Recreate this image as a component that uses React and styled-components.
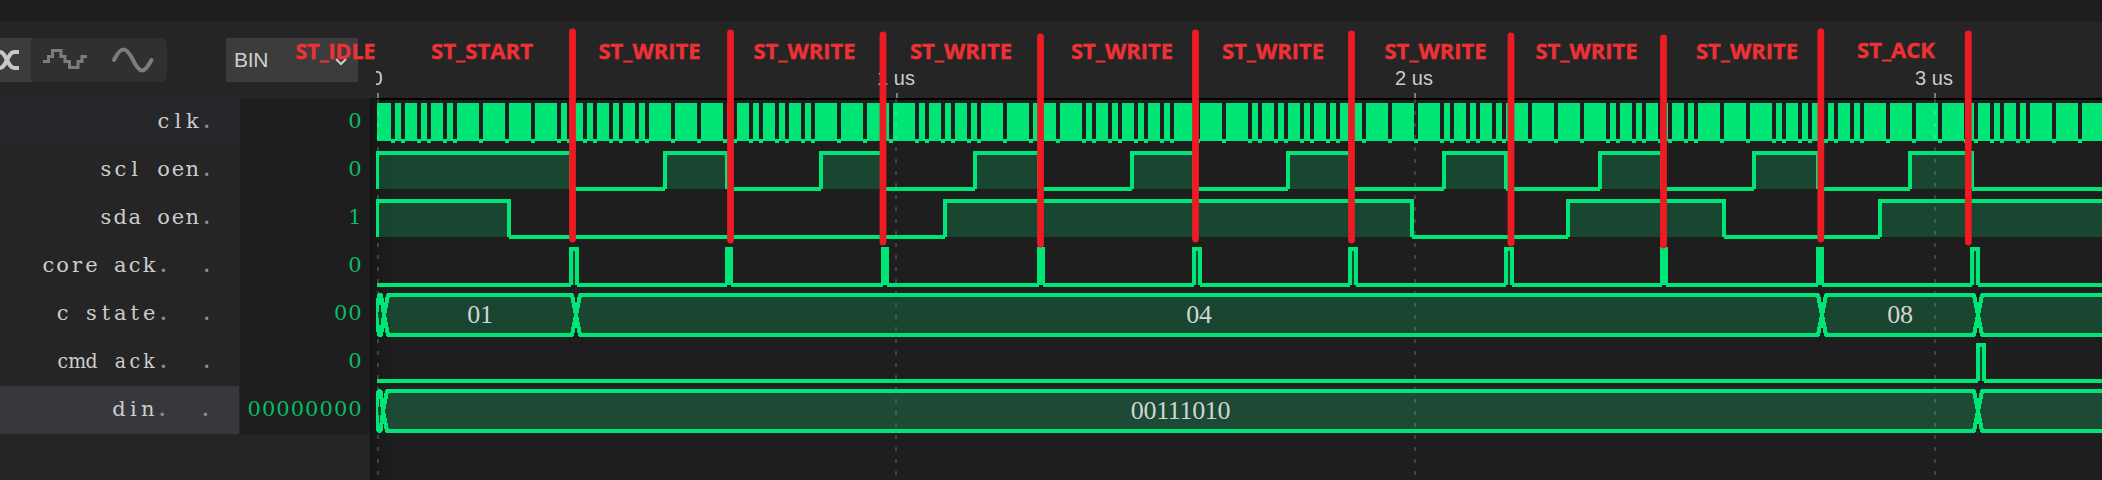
import React from "react";
import styled, { createGlobalStyle } from "styled-components";

const Global = createGlobalStyle`
  body { margin: 0; background: #1e1e1e; overflow: hidden; }
  * { box-sizing: border-box; }
`;

const Viewer = styled.div`
  position: relative;
  width: 2102px;
  height: 480px;
  display: flex;
  flex-direction: column;
  background: #1e1e1e;
  overflow: hidden;
`;
const TopStrip = styled.div`
  height: 22px;
  flex: none;
`;
const Header = styled.header`
  height: 76px;
  flex: none;
  display: flex;
  background: #252525;
`;
const Toolbar = styled.div`
  width: 376px;
  flex: none;
  display: flex;
  padding-top: 16px;
`;
const ModeGroup = styled.div`
  width: 167px;
  height: 44px;
  display: flex;
  border-radius: 0 6px 6px 0;
  overflow: hidden;
  background: #303030;
`;
const ModeButton = styled.button`
  width: ${(p) => p.$w}px;
  height: 44px;
  padding: 0;
  border: 0;
  display: block;
  background: ${(p) => (p.$active ? "#3c3c3c" : "transparent")};
  color: ${(p) => (p.$active ? "#c8c8c8" : "#7c7c7c")};
  svg { display: block; }
`;
const FormatSelect = styled.button`
  width: 132px;
  height: 44px;
  margin-left: 59px;
  border: 0;
  padding: 0 10px 0 8px;
  display: flex;
  align-items: center;
  justify-content: space-between;
  background: #3c3c3c;
  color: #cfcfcf;
  font: 21px "Liberation Sans", Arial, sans-serif;
  letter-spacing: -0.3px;
  svg { margin-top: 4px; }
`;
const Ruler = styled.div`
  flex: 1;
  height: 76px;
  overflow: hidden;
  svg { display: block; }
`;
const Body = styled.main`
  flex: 1;
  display: flex;
`;
const Names = styled.div`
  width: 240px;
  background: #252525;
`;
const NameRow = styled.div`
  width: ${(p) => (p.$selected ? 239 : 240)}px;
  height: 48px;
  display: flex;
  justify-content: flex-end;
  background: ${(p) => (p.$selected ? "#37373d" : p.$hover ? "#26272a" : "transparent")};
`;
const Values = styled.div`
  width: 130px;
  background: #252525;
`;
const ValueRow = styled.div`
  height: 48px;
  display: flex;
  justify-content: flex-end;
  background: #1e1e1e;
`;
const CellText = styled.text`
  font-family: "DejaVu Serif", "Liberation Serif", serif;
  font-size: ${(p) => p.$size}px;
  font-stretch: ${(p) => (p.$narrow ? "condensed" : "normal")};
  fill: ${(p) => p.$color};
  text-anchor: middle;
  white-space: pre;
`;
const Waves = styled.div`
  flex: 1;
  background: linear-gradient(90deg, #141414 0, #1a1a1a 8px, #1e1e1e 24px);
  svg { display: block; }
`;
const Annotations = styled.svg`
  position: absolute;
  left: 0;
  top: 0;
`;

const GREEN = "#00e676";
const END = 2110;
const CELL = 14.4;

const clkGaps = [
  391, 401, 417, 427, 443, 453, 479, 505, 531, 557, 567, 583, 593, 609, 619, 635, 645, 671, 697, 723,
  733, 749, 759, 775, 785, 801, 811, 837, 863, 889, 915, 925, 941, 951, 967, 977, 1003, 1029, 1056,
  1082, 1092, 1108, 1118, 1134, 1144, 1160, 1170, 1196, 1222, 1248, 1258, 1274, 1284, 1300, 1310,
  1326, 1336, 1362, 1388, 1414, 1440, 1450, 1466, 1476, 1492, 1502, 1528, 1554, 1580, 1606, 1616,
  1632, 1642, 1658, 1668, 1684, 1694, 1720, 1746, 1772, 1782, 1798, 1808, 1824, 1834, 1850, 1860,
  1886, 1912, 1938, 1964, 1974, 1990, 2000, 2016, 2026, 2052, 2078,
];
const sclHigh = [
  [377, 571], [665, 727], [821, 883], [975, 1039], [1132, 1194], [1288, 1350], [1444, 1506],
  [1600, 1662], [1754, 1818], [1910, 1972],
];
const sdaHigh = [[377, 509], [945, 1412], [1568, 1724], [1880, END]];
const coreAck = [
  [571, 577], [727, 731], [883, 887], [1039, 1043], [1194, 1200], [1350, 1356], [1506, 1512],
  [1662, 1666], [1818, 1822], [1972, 1978],
];
const cmdAck = [[1978, 1984]];
const stateBus = [[384, 576, "01"], [576, 1822, "04"], [1822, 1978, "08"], [1978, END + 20, ""]];
const dinBus = [[383, 1978, "00111010"], [1978, END + 20, ""]];

const rows = [
  { name: "clk", dots: ".", value: "0", hover: true },
  { name: "scl oen", dots: ".", value: "0" },
  { name: "sda oen", dots: ".", value: "1" },
  { name: "core ack", dots: ".  .", value: "0" },
  { name: "c state", dots: ".  .", value: "00" },
  { name: "cmd ack", dots: ".  .", value: "0", narrow: true },
  { name: "din", dots: ".  .", value: "00000000", selected: true },
];

const markers = [
  [572.5, 32, 239], [730.5, 33, 240], [883, 35, 242], [1040.5, 37, 244], [1195.5, 33, 239],
  [1351.5, 34, 240], [1511, 36, 243], [1663.5, 38, 245], [1820.8, 32, 239], [1968.3, 34, 242],
];
const stateLabels = [
  [295.5, 59, "ST_IDLE", 80], [431, 58.5, "ST_START", 102], [598.5, 59, "ST_WRITE", 102],
  [753.5, 59, "ST_WRITE", 102], [910, 59, "ST_WRITE", 102], [1071, 59, "ST_WRITE", 102],
  [1222, 59, "ST_WRITE", 102], [1384.5, 59, "ST_WRITE", 102], [1535.5, 59, "ST_WRITE", 102],
  [1696, 59, "ST_WRITE", 102], [1857, 58, "ST_ACK", 78],
];

/* Text set on a fixed character grid, the last cell centred on `end`. */
function Cells({ text, end, color, size, narrow }) {
  const xs = [...text].map((_, i) => (end - (text.length - 1 - i) * CELL).toFixed(1)).join(" ");
  return (
    <CellText x={xs} y="30" $color={color} $size={size} $narrow={narrow}>{text}</CellText>
  );
}

function Clock({ top }) {
  return (
    <g>
      <rect x="377" y={top + 5} width={END - 377} height="38" fill={GREEN} />
      {clkGaps.map((x) => (
        <g key={x}>
          <rect x={x} y={top + 5} width="4" height="36" fill="#1e1e1e" />
          <rect x={x} y={top + 41} width="4" height="4" fill={GREEN} />
        </g>
      ))}
    </g>
  );
}

function Digital({ top, high }) {
  const hi = top + 7;
  const lo = top + 43;
  const lows = [];
  let x = 377;
  high.forEach(([a, b]) => {
    if (a > x) lows.push([x, a]);
    x = b;
  });
  if (x < END) lows.push([x, END]);
  return (
    <g fill="none" stroke={GREEN} strokeWidth="4" shapeRendering="crispEdges">
      {lows.map(([a, b]) => <path key={a} d={`M${a} ${lo}H${b}`} />)}
      {high.map(([a, b]) => (
        <g key={a}>
          <rect x={a} y={hi} width={b - a} height={36} fill={GREEN} fillOpacity="0.2" stroke="none" />
          <path d={`M${a} ${lo}V${hi}H${b}V${lo}`} />
        </g>
      ))}
    </g>
  );
}

const BusText = styled.text`
  font: 26px "Liberation Serif", "Times New Roman", serif;
  letter-spacing: -0.35px;
  fill: #d4d4d4;
  text-anchor: middle;
`;

function Bus({ top, segments, start }) {
  const hi = top + 5;
  const lo = top + 45;
  const mid = top + 25;
  const mx = (376 + start) / 2;
  return (
    <g>
      <g stroke={GREEN} strokeWidth="4" fill={GREEN} fillOpacity="0.2" shapeRendering="crispEdges" strokeLinejoin="bevel">
        <path d={`M376 ${mid}L${mx - 1} ${hi}H${mx + 1}L${start} ${mid}L${mx + 1} ${lo}H${mx - 1}Z`} />
        {segments.map(([a, b]) => (
          <path key={a} d={`M${a} ${mid}L${a + 4} ${hi}H${b - 4}L${b} ${mid}L${b - 4} ${lo}H${a + 4}Z`} />
        ))}
      </g>
      {segments.map(([a, b, t]) => t && (
        <BusText key={a} x={(a + b) / 2} y={top + 33}>{t}</BusText>
      ))}
    </g>
  );
}

const TickText = styled.text`
  font: 20px "Liberation Sans", Arial, sans-serif;
  fill: #cccccc;
  text-anchor: middle;
`;
const StateText = styled.text`
  font: bold 22px "Open Sans", "Noto Sans", sans-serif;
  fill: #ee3135;
  stroke: #ee3135;
  stroke-width: 0.4px;
`;

export default function App() {
  return (
    <>
      <Global />
      <Viewer>
        <TopStrip />
        <Header>
          <Toolbar>
            <ModeGroup>
              <ModeButton $w={31} $active>
                <svg width="31" height="44" fill="none" stroke="currentColor" strokeWidth="4">
                  <path d="M-4 14H0C6 14 8 30 14 30H19M-4 30H0C6 30 8 14 14 14H19" />
                </svg>
              </ModeButton>
              <ModeButton $w={68}>
                <svg width="68" height="44" fill="none" stroke="currentColor" strokeWidth="3">
                  <path d="M12 23.5H17.5V18.5H21.5V12.5H30V18.5H34V23.5H38.5V29.5H47V23.5H51V18.5H56" />
                </svg>
              </ModeButton>
              <ModeButton $w={68}>
                <svg width="68" height="44" fill="none" stroke="currentColor" strokeWidth="4" strokeLinecap="round">
                  <path d="M15 22C22 8 27 8 34 22S45 36 52.500 22" />
                </svg>
              </ModeButton>
            </ModeGroup>
            <FormatSelect>
              BIN
              <svg width="14" height="10" fill="none" stroke="currentColor" strokeWidth="2">
                <path d="M2 2L7 7L12 2" />
              </svg>
            </FormatSelect>
          </Toolbar>
          <Ruler>
            <svg width="1726" height="76" viewBox="376 22 1726 76">
              {[[377, "0"], [896, "1 us"], [1414, "2 us"], [1934, "3 us"]].map(([x, t]) => (
                <g key={x}>
                  <TickText x={x} y="85">{t}</TickText>
                  <rect x={x} y="93" width="2" height="5" fill="#7c7c7c" />
                </g>
              ))}
            </svg>
          </Ruler>
        </Header>
        <Body>
          <Names>
            {rows.map((r) => {
              const end = r.selected ? 205.4 : 206.7;
              return (
                <NameRow key={r.name} $selected={r.selected} $hover={r.hover}>
                  <svg width={r.selected ? 239 : 240} height="48">
                    <Cells text={r.name} end={end - r.dots.length * CELL} color="#cccccc" size={21} narrow={r.narrow} />
                    <Cells text={r.dots} end={end} color="#8c8c8c" size={26} />
                  </svg>
                </NameRow>
              );
            })}
          </Names>
          <Values>
            {rows.map((r) => (
              <ValueRow key={r.name}>
                <svg width="130" height="48">
                  <Cells text={r.value} end={115} color="#07bd63" size={21} />
                </svg>
              </ValueRow>
            ))}
          </Values>
          <Waves>
            <svg width="1732" height="382" viewBox="370 98 1732 382">
              <defs>
                <clipPath id="plot"><rect x="376" y="98" width="1726" height="382" /></clipPath>
              </defs>
              <g clipPath="url(#plot)">
                <rect x="376" y="98" width="1726" height="2" fill="#000" />
                <rect x="376" y="386" width="1726" height="48" fill="#fff" fillOpacity="0.025" />
                <Clock top={98} />
                {[377, 895, 1414, 1934].map((x) => (
                  <path key={x} d={`M${x + 1} 99V480`} stroke="#fff" strokeOpacity="0.17" strokeWidth="2" strokeDasharray="4 8" />
                ))}
                <Digital top={146} high={sclHigh} />
                <Digital top={194} high={sdaHigh} />
                <Digital top={242} high={coreAck} />
                <Bus top={290} segments={stateBus} start={384} />
                <Digital top={338} high={cmdAck} />
                <Bus top={386} segments={dinBus} start={383} />
              </g>
            </svg>
          </Waves>
        </Body>
        <Annotations width="2102" height="480">
          {markers.map(([x, a, b]) => (
            <path key={x} d={`M${x} ${a}V${b}`} stroke="#ed1c24" strokeWidth="6.800" strokeLinecap="round" />
          ))}
          {stateLabels.map(([x, y, t, w]) => (
            <StateText key={x} x={x} y={y} textLength={w} lengthAdjust="spacingAndGlyphs">{t}</StateText>
          ))}
        </Annotations>
      </Viewer>
    </>
  );
}
